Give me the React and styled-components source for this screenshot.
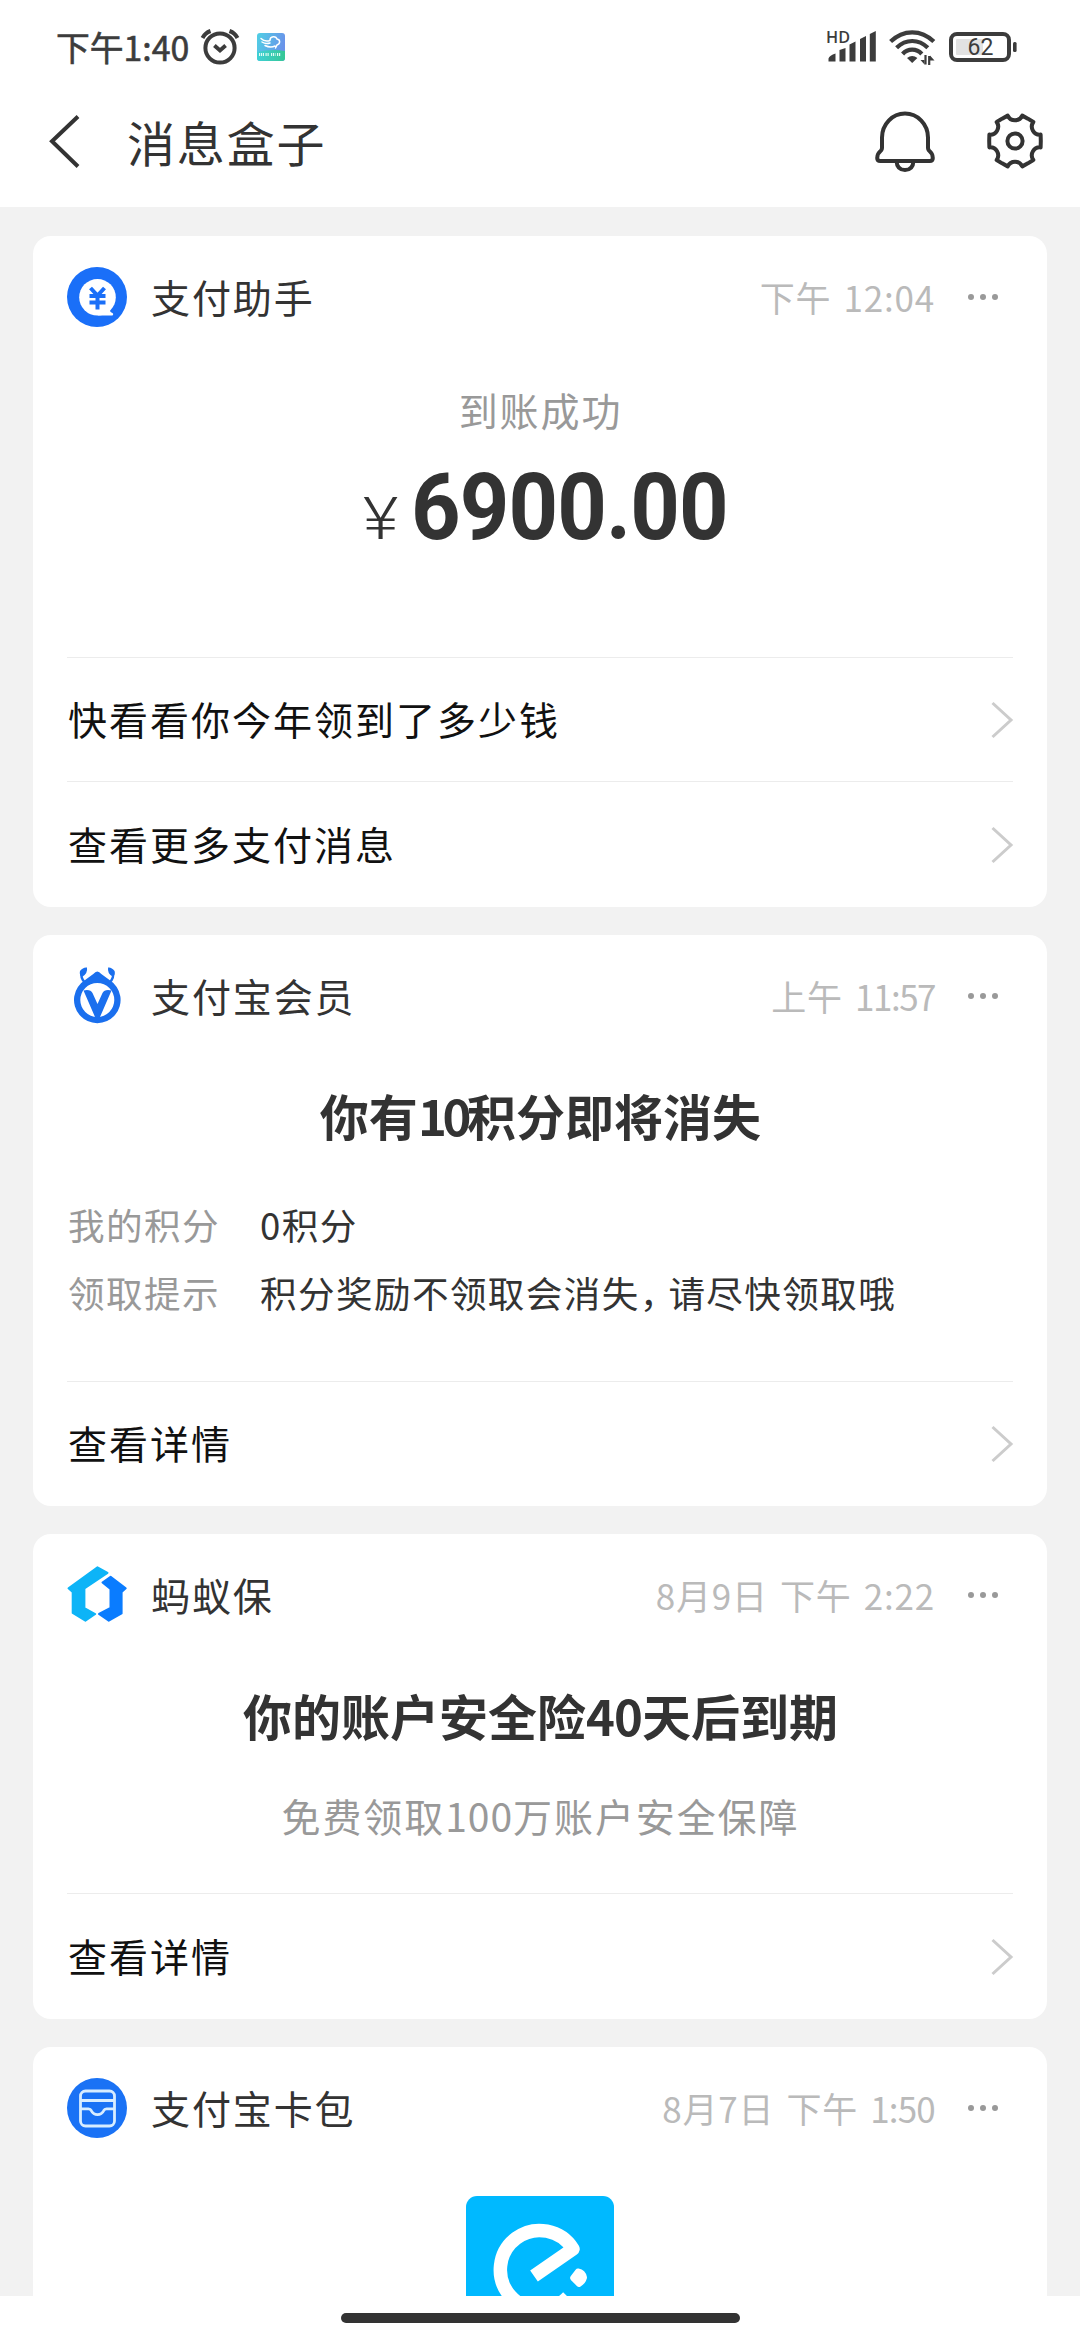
import React from "react";
import styled, { createGlobalStyle } from "styled-components";

const GlobalStyle = createGlobalStyle`
  *, *::before, *::after { box-sizing: border-box; }
  html, body { margin: 0; padding: 0; background: #fff; }
  body { font-family: "Noto Sans CJK SC", "Noto Sans", sans-serif; color: #333; }
  svg { display: block; flex: none; overflow: visible; }
`;

const Screen = styled.div`
  width: 1080px;
  height: 2340px;
  display: flex;
  flex-direction: column;
  overflow: hidden;
  background: #fff;
`;

const StatusBar = styled.div`
  height: 90px;
  padding: 3px 62px 0 56px;
  display: flex;
  align-items: center;
  justify-content: space-between;
  color: #3c3c3c;
`;

const StatusGroup = styled.div`
  display: flex;
  align-items: center;
  gap: ${(p) => p.$gap || 0}px;
`;

const Clock = styled.span`
  font-size: 33.8px;
  font-weight: 400;
  -webkit-text-stroke: 0.6px #3c3c3c;
  line-height: 40px;
  width: 144px;
  white-space: nowrap;
`;

const SignalText = styled.text`
  font: 600 15.5px "Open Sans", sans-serif;
  fill: #3c3c3c;
`;

const BatteryText = styled.text`
  font: 400 23px Roboto, sans-serif;
  fill: #3c3c3c;
`;

const NavBar = styled.header`
  height: 117px;
  padding: 0 35px 16px 46px;
  display: flex;
  align-items: center;
`;

const NavTitle = styled.h1`
  margin: 0 auto 0 45px;
  font-size: 48px;
  font-weight: 400;
  letter-spacing: 1.8px;
  line-height: 60px;
`;

const NavActions = styled.div`
  display: flex;
  align-items: center;
  gap: 49px;
`;

const Feed = styled.main`
  flex: 1;
  min-height: 0;
  overflow: hidden;
  background: #f2f2f2;
  padding: 29px 33px 0;
  display: flex;
  flex-direction: column;
  gap: 28px;
`;

const Card = styled.section`
  flex: none;
  height: ${(p) => p.$height}px;
  background: #fff;
  border-radius: 18px;
  display: flex;
  flex-direction: column;
`;

const CardHeader = styled.div`
  flex: none;
  height: 122px;
  padding: 0 48px 0 34px;
  display: flex;
  align-items: center;
`;

const Sender = styled.span`
  margin: -2px auto 0 24px;
  font-size: 39px;
  letter-spacing: 1.9px;
  line-height: 56px;
`;

const Time = styled.time`
  margin-right: 32px;
  font-size: 35px;
  letter-spacing: 0.8px;
  word-spacing: 3.5px;
  line-height: 48px;
  color: #bababa;
`;

const CardBody = styled.div`
  flex: 1;
  min-height: 0;
  padding-top: ${(p) => p.$top}px;
  display: flex;
  flex-direction: column;
  align-items: center;
`;

const Caption = styled.p`
  margin: ${(p) => p.$top || 0}px 0 0;
  padding-left: 1px;
  font-size: 39px;
  letter-spacing: 1.9px;
  line-height: 56px;
  color: #999;
`;

const Amount = styled.div`
  margin-top: 25px;
  padding-left: 6px;
  display: flex;
  align-items: baseline;
  font-family: Roboto, sans-serif;
`;

const Currency = styled.span`
  width: 48px;
  font-size: 59px;
  font-weight: 300;
  line-height: 92px;
  transform: scaleX(1.16);
  transform-origin: left;
`;

const Figure = styled.span`
  width: 313px;
  font-size: 92px;
  font-weight: 700;
  line-height: 92px;
  letter-spacing: -0.9px;
  white-space: nowrap;
  transform: scaleX(0.94);
  transform-origin: left;
`;

const Headline = styled.h2`
  margin: 0;
  padding-left: 1px;
  font-size: 49px;
  font-weight: 700;
  line-height: 66px;
`;

const Spaced = styled.span`
  letter-spacing: ${(p) => p.$spacing}px;
`;

const Details = styled.dl`
  margin: 43px 0 0;
  align-self: stretch;
  padding: 0 35px;
  display: grid;
  grid-template-columns: 192px 1fr;
  font-size: 36.6px;
  letter-spacing: 1.4px;
  line-height: 68px;
`;

const DetailName = styled.dt`
  color: #999;
`;

const DetailValue = styled.dd`
  margin: 0;
  white-space: nowrap;
`;

const ActionRow = styled.div`
  flex: none;
  height: ${(p) => p.$height}px;
  margin: 0 34px;
  padding-left: 1px;
  border-top: 1px solid #ececec;
  display: flex;
  align-items: center;
  justify-content: space-between;
`;

const ActionLabel = styled.span`
  margin-top: -4px;
  font-size: 39px;
  letter-spacing: 2px;
  color: #111;
`;

const BrandTile = styled.div`
  width: 148px;
  height: 148px;
  border-radius: 11px;
  background: #00b9ff;
`;

const GestureArea = styled.footer`
  flex: none;
  height: 44px;
  padding-top: 17px;
  background: #fff;
`;

const GestureBar = styled.div`
  width: 399px;
  height: 10px;
  margin: 0 auto;
  border-radius: 5px;
  background: #333;
`;

const AlarmIcon = () => (
  <svg width="40" height="38" viewBox="0 0 40 38" fill="none" stroke="#3c3c3c" strokeWidth="4">
    <circle cx="20" cy="20" r="14.6" />
    <path d="M14.4 17.6 20 22.4l5.6-4.8" />
    <path d="M2.500 10Q5 5 10.500 3M37.500 10Q35 5 29.500 3" />
  </svg>
);

const AppBadge = () => (
  <svg width="28" height="28" viewBox="0 0 28 28" fill="none">
    <defs>
      <linearGradient id="sky" x1="0" y1="0" x2="1" y2="0.3">
        <stop offset="0" stopColor="#4fd0e4" />
        <stop offset="1" stopColor="#6a93ea" />
      </linearGradient>
      <linearGradient id="ground" x1="0" y1="0" x2="1" y2="0">
        <stop offset="0" stopColor="#3fd0d6" />
        <stop offset="1" stopColor="#35c795" />
      </linearGradient>
    </defs>
    <rect width="28" height="28" rx="3" fill="url(#sky)" />
    <path d="M0 19Q14 15.500 28 18v7a3 3 0 0 1-3 3H3a3 3 0 0 1-3-3z" fill="url(#ground)" />
    <path
      d="M4 5.500c3 3 6 3 9 2M5 9c3 2 5 2 8 1M8 12.500c3 1.500 7 2 10 .5M13 7c0-4 6-4.500 7-1 3.500.5 3.500 5 0 6l-1.500 3"
      stroke="#fff"
      strokeWidth="1.500"
      strokeLinecap="round"
    />
    <path d="M2 21.500h5M8.500 21.500h4M14 21.500h4.500M20 21.500h4" stroke="#dffaf3" strokeWidth="3" strokeDasharray="1.200 .8" />
  </svg>
);

const SignalIcon = () => (
  <svg width="52" height="36" viewBox="0 0 52 36" fill="#3c3c3c">
    <SignalText x="0" y="13.500" textLength="24" lengthAdjust="spacingAndGlyphs">HD</SignalText>
    <path d="M2.500 32.500V29.500q1-3 7-5v8zM13.500 32.500V21l6-2v13.500zM23.500 32.500V15.500l6-3v20zM34 32.500V10l6-3v25.500zM43.800 32.500V5l6-3v30.500z" />
  </svg>
);

const WifiIcon = () => (
  <svg width="48" height="36" viewBox="0 0 48 36" fill="none" stroke="#3c3c3c" strokeWidth="4.200">
    <path d="M1.600 12.600Q11 3.300 23.200 3.300t21.600 9.300" />
    <path d="M7.600 18.800Q14.500 12 23.200 12t15.600 6.800" />
    <path d="M13.600 25Q17.500 20.700 23.200 20.700T32.800 25" />
    <path d="M18 29q5.200-3.800 10.400 0l-5.200 5z" fill="#3c3c3c" stroke="none" />
    <path d="M36.500 26v9.500M40.200 36V27" strokeWidth="2.200" />
    <path d="M31.500 31h4v4.500zM41 26.500l4.500 5H41z" fill="#3c3c3c" stroke="none" />
  </svg>
);

const BatteryIcon = () => (
  <svg width="70" height="32" viewBox="0 0 70 32">
    <rect x="3" y="3" width="58" height="26" rx="6" fill="#fff" stroke="#3c3c3c" strokeWidth="4" />
    <rect x="8" y="8" width="27" height="16" rx="1" fill="#e2e2e2" />
    <rect x="65" y="11" width="3.600" height="10" rx="1.500" fill="#3c3c3c" />
    <BatteryText x="32.500" y="24.200" textAnchor="middle">62</BatteryText>
  </svg>
);

const BackIcon = () => (
  <svg width="36" height="54" viewBox="0 0 36 54" fill="none" stroke="#333" strokeWidth="4">
    <path d="M32 2.500 6 27.300 32 52.500" />
  </svg>
);

const BellIcon = () => (
  <svg width="62" height="64" viewBox="0 0 62 64" fill="none" stroke="#333" strokeWidth="4" strokeLinejoin="round">
    <path d="M8 39V28.500a23 24 0 0 1 46 0V39q0 1.500 1 2.500 3.800 3 3.800 7.500 0 3-3 3H6.200q-3 0-3-3 0-4.500 3.800-7.500Q8 40.500 8 39z" />
    <path d="M22.500 52q.5 9 8.500 9t8.500-9" />
  </svg>
);

const gearPoint = (radius, degrees) => {
  const a = (degrees * Math.PI) / 180;
  return `${(30 + radius * Math.cos(a)).toFixed(2)} ${(30 + radius * Math.sin(a)).toFixed(2)}`;
};

const gearPath =
  [0, 60, 120, 180, 240, 300]
    .map(
      (a, i) =>
        `${i ? "L" : "M"}${gearPoint(26.4, a - 14)}L${gearPoint(25.8, a)}L${gearPoint(26.4, a + 14)}A8 8 0 0 0 ${gearPoint(26.4, a + 46)}`
    )
    .join("") + "Z";

const GearIcon = () => (
  <svg width="60" height="60" viewBox="0 0 60 60" fill="none" stroke="#333" strokeWidth="4">
    <path d={gearPath} strokeLinejoin="round" />
    <circle cx="30" cy="30" r="7.600" />
  </svg>
);

const MoreIcon = () => (
  <svg width="32" height="8" viewBox="0 0 32 8" fill="#999">
    <circle cx="4" cy="4" r="3" />
    <circle cx="16" cy="4" r="3" />
    <circle cx="28" cy="4" r="3" />
  </svg>
);

const ChevronIcon = () => (
  <svg width="22" height="38" viewBox="0 0 22 38" fill="none" stroke="#ccc" strokeWidth="3">
    <path d="M1.500 2 20 19 1.500 36" />
  </svg>
);

const PayIcon = () => (
  <svg width="60" height="60" viewBox="0 0 60 60" fill="none">
    <circle cx="30" cy="30" r="30" fill="#1a6ff8" />
    <circle cx="30.500" cy="30.300" r="18.300" fill="#fff" />
    <path d="M30.500 48.600H45.500q2-2.200-1.500-3.400l-2.500-3z" fill="#fff" />
    <path d="m23.500 21 7 7.500 7-7.500M30.500 28v14.500M22.500 29h16M22.500 35.500h16" stroke="#1a6ff8" strokeWidth="4" />
  </svg>
);

const MemberIcon = () => (
  <svg width="60" height="60" viewBox="0 0 60 60" fill="#1a6fee">
    <path
      fillRule="evenodd"
      d="M30.300 5.500q2 0 4 2.500l8.200 6A23.300 23.300 0 1 1 18.100 14l8.200-6q2-2.500 4-2.500zM30.300 17a17 17 0 1 0 0 34 17 17 0 0 0 0-34z"
    />
    <path d="M16.500 24.500q7-1.500 9 2.500l5 11 5-11q2-4 9-2.500L33 51h-5z" />
    <path d="M17.500 16Q13.500 12 14.500 7M43 16Q47 12 46 7" fill="none" stroke="#1a6fee" strokeWidth="2.400" />
    <path d="M13 5q3-4 7-3.500 1 6-5 9.500-3-2-2-6zM47.600 5q-3-4-6.500-3.500-1 6 4.500 9 3-1.500 2-5.500z" />
  </svg>
);

const InsureIcon = () => (
  <svg width="60" height="60" viewBox="0 0 60 60" strokeWidth="2" strokeLinejoin="round">
    <path d="M30.500 2.300 40.500 7.800 17.400 23.500V43L28.200 49 18.400 55.700 5.700 48V27L1.500 23.300z" fill="#0db4f7" stroke="#0db4f7" />
    <path d="M43.600 11.700 58.700 23.300 54.600 27V48.500L41.800 55.700 32 49 43.500 43V24L35.500 17.500z" fill="#0a7cff" stroke="#0a7cff" />
  </svg>
);

const WalletIcon = () => (
  <svg width="60" height="60" viewBox="0 0 60 60" fill="none" stroke="#d8edff" strokeWidth="2.800">
    <circle cx="30" cy="30" r="30" fill="#1a72f5" stroke="none" />
    <rect x="13.500" y="13" width="34" height="35" rx="5" />
    <path d="M13.500 22.500h34M13.500 30.800h8q2 0 2.800 1.800 2 4 6.200 4t6.200-4q.8-1.800 2.800-1.800h8" />
  </svg>
);

const DeliveryLogo = () => (
  <svg width="148" height="148" viewBox="0 0 148 148" fill="none" stroke="#fff" strokeWidth="13.500" strokeLinejoin="round">
    <path d="M102 101A39.300 39.300 0 1 1 107 53L68 80" />
    <path d="m112 75.500q5 1 6 6-1 4-5 6.500l-6-6z" fill="#fff" strokeWidth="6" />
  </svg>
);

const Message = ({ height, icon, sender, day, clock, clockSpacing = 0.8, top, actions, children }) => (
  <Card $height={height}>
    <CardHeader>
      {icon}
      <Sender>{sender}</Sender>
      <Time>
        {day} <Spaced $spacing={clockSpacing}>{clock}</Spaced>
      </Time>
      <MoreIcon />
    </CardHeader>
    <CardBody $top={top}>{children}</CardBody>
    {actions.map((action) => (
      <ActionRow key={action.label} $height={action.height}>
        <ActionLabel>{action.label}</ActionLabel>
        <ChevronIcon />
      </ActionRow>
    ))}
  </Card>
);

export default function App() {
  return (
    <Screen>
      <GlobalStyle />
      <StatusBar>
        <StatusGroup $gap={17}>
          <StatusGroup>
            <Clock>下午1:40</Clock>
            <AlarmIcon />
          </StatusGroup>
          <AppBadge />
        </StatusGroup>
        <StatusGroup $gap={11}>
          <SignalIcon />
          <WifiIcon />
          <BatteryIcon />
        </StatusGroup>
      </StatusBar>
      <NavBar>
        <BackIcon />
        <NavTitle>消息盒子</NavTitle>
        <NavActions>
          <BellIcon />
          <GearIcon />
        </NavActions>
      </NavBar>
      <Feed>
        <Message
          height={671}
          icon={<PayIcon />}
          sender="支付助手"
          day="下午"
          clock="12:04"
          top={23}
          actions={[
            { label: "快看看你今年领到了多少钱", height: 124 },
            { label: "查看更多支付消息", height: 126 },
          ]}
        >
          <Caption>到账成功</Caption>
          <Amount>
            <Currency>¥</Currency>
            <Figure>6900.00</Figure>
          </Amount>
        </Message>
        <Message
          height={571}
          icon={<MemberIcon />}
          sender="支付宝会员"
          day="上午"
          clock="11:57"
          clockSpacing={-1.5}
          top={25}
          actions={[{ label: "查看详情", height: 125 }]}
        >
          <Headline>
            你有<Spaced $spacing={-4.3}>10</Spaced>积分即将消失
          </Headline>
          <Details>
            <DetailName>我的积分</DetailName>
            <DetailValue>0积分</DetailValue>
            <DetailName>领取提示</DetailName>
            <DetailValue>
              积分奖励不领取会消失<Spaced $spacing={-8}>，</Spaced>请尽快领取哦
            </DetailValue>
          </Details>
        </Message>
        <Message
          height={485}
          icon={<InsureIcon />}
          sender="蚂蚁保"
          day="8月9日 下午"
          clock="2:22"
          top={26}
          actions={[{ label: "查看详情", height: 126 }]}
        >
          <Headline>
            你的账户安全险<Spaced $spacing={-1}>40</Spaced>天后到期
          </Headline>
          <Caption $top={39}>
            免费领取<Spaced $spacing={1}>100</Spaced>万账户安全保障
          </Caption>
        </Message>
        <Message
          height={485}
          icon={<WalletIcon />}
          sender="支付宝卡包"
          day="8月7日 下午"
          clock="1:50"
          clockSpacing={-0.8}
          top={27}
          actions={[]}
        >
          <BrandTile>
            <DeliveryLogo />
          </BrandTile>
        </Message>
      </Feed>
      <GestureArea>
        <GestureBar />
      </GestureArea>
    </Screen>
  );
}
